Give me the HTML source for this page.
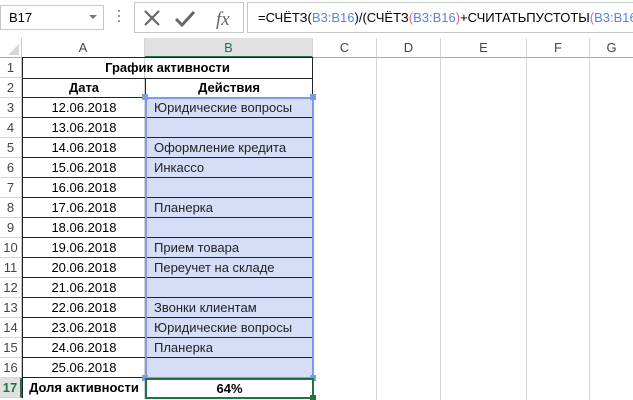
<!DOCTYPE html>
<html><head><meta charset="utf-8"><style>
*{margin:0;padding:0;box-sizing:border-box}
body{width:633px;height:400px;overflow:hidden;background:#fff;font-family:"Liberation Sans",Arial,sans-serif;font-size:13px;color:#000;position:relative}
.a{position:absolute}
.grid{left:22px;top:57px;width:611px;height:343px;background:
repeating-linear-gradient(to bottom,transparent 0,transparent 20px,#d4d4d4 20px,#d4d4d4 21px) 0 0/100% 20px;}
.vl{position:absolute;top:38px;width:1px;height:362px;background:#d4d4d4}
.rh{position:absolute;left:0;width:22px;height:20px;text-align:center;line-height:20px;color:#444;font-size:13px;background:#fff;border-right:1px solid #c6c6c6;border-bottom:1px solid #d4d4d4}
.ch{position:absolute;top:38px;height:20px;line-height:20px;text-align:center;color:#444;border-right:1px solid #d4d4d4;border-bottom:1px solid #ababab;font-size:13px}
.c{position:absolute;height:20px;line-height:20px;white-space:nowrap}
.A{left:22px;width:123px;text-align:center;border-bottom:1px solid #222;border-left:1px solid #222}
.B{left:145px;width:168px;padding-left:8px;border-bottom:1px solid #222;border-right:1px solid #222;border-left:1px solid #222;background:#d6ddf6;color:#222}
</style></head><body>
<!-- toolbar -->
<div class="a" style="left:0;top:0;width:633px;height:38px;background:#fff"></div>
<div class="a" style="left:0;top:5px;width:104px;height:25px;border:1px solid #c6c6c6;line-height:23px;padding-left:8px;font-size:13px">B17</div>
<div class="a" style="left:89px;top:15px;width:0;height:0;border-left:4px solid transparent;border-right:4px solid transparent;border-top:4px solid #777"></div>
<div class="a" style="left:118px;top:10px;width:2px;height:14px;background:repeating-linear-gradient(#999 0 2px,transparent 2px 5px)"></div>
<div class="a" style="left:134px;top:2px;width:110px;height:31px;border:1px solid #c6c6c6"></div>
<svg class="a" style="left:140px;top:6px" width="100" height="24">
<path d="M5 5 L19 19 M19 5 L5 19" stroke="#666" stroke-width="2.2" fill="none"/>
<path d="M36 13 L42 19 L54 6" stroke="#666" stroke-width="3" fill="none"/>
<text x="76" y="19" font-family="Liberation Serif" font-style="italic" font-size="19" fill="#666">fx</text>
</svg>
<div class="a" style="left:247px;top:2px;width:386px;height:31px;border:1px solid #c6c6c6;border-right:none;line-height:29px;padding-left:10px;font-size:13px;white-space:nowrap">=СЧЁТЗ(<span style="color:#5b83e0">B3:B16</span>)/(СЧЁТЗ<span style="color:#e06070">(</span><span style="color:#5b83e0">B3:B16</span><span style="color:#e06070">)</span>+СЧИТАТЬПУСТОТЫ<span style="color:#b06ad8">(</span><span style="color:#5b83e0">B3:B16</span><span style="color:#b06ad8">)</span>)</div>
<!-- grid -->
<div class="a grid"></div>
<div class="vl" style="left:144px"></div><div class="vl" style="left:312px"></div><div class="vl" style="left:376px"></div><div class="vl" style="left:440px"></div><div class="vl" style="left:526px"></div><div class="vl" style="left:589px"></div>
<!-- col headers -->
<div class="a" style="left:0;top:38px;width:22px;height:20px;border-right:1px solid #c6c6c6;border-bottom:1px solid #ababab"></div>
<div class="a" style="left:8px;top:44px;width:0;height:0;border-left:11px solid transparent;border-bottom:11px solid #d6d6d6"></div>
<div class="ch" style="left:22px;width:123px">A</div>
<div class="ch" style="left:145px;width:168px;background:#e1e1e1;color:#217346;border-bottom:2px solid #217346">B</div>
<div class="ch" style="left:313px;width:64px">C</div>
<div class="ch" style="left:377px;width:64px">D</div>
<div class="ch" style="left:441px;width:86px">E</div>
<div class="ch" style="left:527px;width:63px">F</div>
<div class="ch" style="left:590px;width:43px;border-right:none">G</div>
<!-- row headers -->
<div class="rh" style="top:58px">1</div><div class="rh" style="top:78px">2</div><div class="rh" style="top:98px">3</div><div class="rh" style="top:118px">4</div><div class="rh" style="top:138px">5</div><div class="rh" style="top:158px">6</div><div class="rh" style="top:178px">7</div><div class="rh" style="top:198px">8</div><div class="rh" style="top:218px">9</div><div class="rh" style="top:238px">10</div><div class="rh" style="top:258px">11</div><div class="rh" style="top:278px">12</div><div class="rh" style="top:298px">13</div><div class="rh" style="top:318px">14</div><div class="rh" style="top:338px">15</div><div class="rh" style="top:358px">16</div>
<div class="rh" style="top:378px;background:#e1e1e1;color:#217346;border-right:2px solid #217346;font-weight:bold">17</div>
<!-- table -->
<div class="c" style="left:22px;top:57px;width:291px;border:1px solid #222;text-align:center;font-weight:bold;height:22px;line-height:20px">График активности</div>
<div class="c A" style="top:78px;font-weight:bold">Дата</div>
<div class="c" style="left:145px;top:78px;width:168px;text-align:center;font-weight:bold;border-left:1px solid #222;border-right:1px solid #222;border-bottom:1px solid #222">Действия</div>
<div class="c A" style="top:98px">12.06.2018</div><div class="c B" style="top:98px">Юридические вопросы</div>
<div class="c A" style="top:118px">13.06.2018</div><div class="c B" style="top:118px"></div>
<div class="c A" style="top:138px">14.06.2018</div><div class="c B" style="top:138px">Оформление кредита</div>
<div class="c A" style="top:158px">15.06.2018</div><div class="c B" style="top:158px">Инкассо</div>
<div class="c A" style="top:178px">16.06.2018</div><div class="c B" style="top:178px"></div>
<div class="c A" style="top:198px">17.06.2018</div><div class="c B" style="top:198px">Планерка</div>
<div class="c A" style="top:218px">18.06.2018</div><div class="c B" style="top:218px"></div>
<div class="c A" style="top:238px">19.06.2018</div><div class="c B" style="top:238px">Прием товара</div>
<div class="c A" style="top:258px">20.06.2018</div><div class="c B" style="top:258px">Переучет на складе</div>
<div class="c A" style="top:278px">21.06.2018</div><div class="c B" style="top:278px"></div>
<div class="c A" style="top:298px">22.06.2018</div><div class="c B" style="top:298px">Звонки клиентам</div>
<div class="c A" style="top:318px">23.06.2018</div><div class="c B" style="top:318px">Юридические вопросы</div>
<div class="c A" style="top:338px">24.06.2018</div><div class="c B" style="top:338px">Планерка</div>
<div class="c A" style="top:358px">25.06.2018</div><div class="c B" style="top:358px"></div>
<div class="c" style="left:22px;top:378px;width:123px;text-align:center;font-weight:bold;border-left:1px solid #222">Доля активности</div>
<!-- selection range border -->
<div class="a" style="left:145px;top:97px;width:169px;height:282px;border:2px solid #7a9be6"></div>
<div class="a" style="left:142px;top:94px;width:6px;height:6px;background:#7a9be6"></div>
<div class="a" style="left:310px;top:94px;width:6px;height:6px;background:#7a9be6"></div>
<div class="a" style="left:142px;top:375px;width:6px;height:6px;background:#7a9be6"></div>
<div class="a" style="left:310px;top:375px;width:6px;height:6px;background:#7a9be6"></div>
<!-- active cell -->
<div class="a" style="left:145px;top:378px;width:169px;height:21px;border:2px solid #217346;background:#fff;text-align:center;line-height:17px;font-weight:bold">64%</div>
<div class="a" style="left:310px;top:395px;width:6px;height:5px;background:#217346"></div>
</body></html>
